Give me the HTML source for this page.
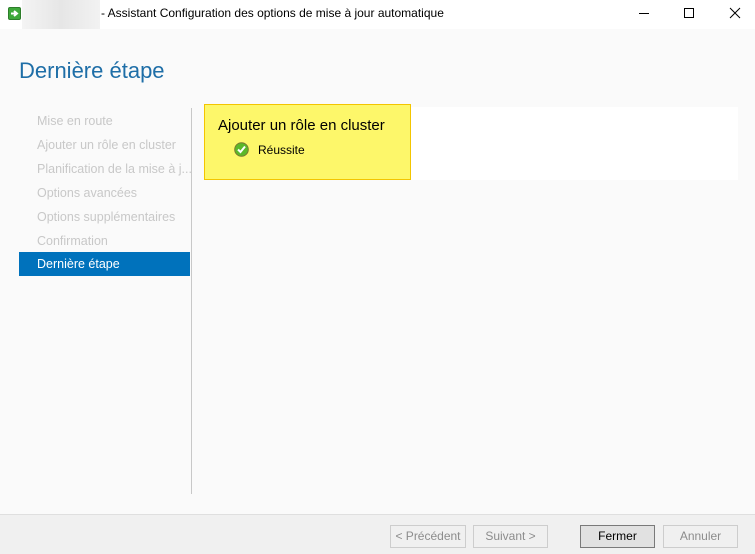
<!DOCTYPE html>
<html><head><meta charset="utf-8"><style>
*{margin:0;padding:0;box-sizing:border-box}
body{width:755px;height:554px;background:#fafafa;font-family:"Segoe UI","Liberation Sans",sans-serif;position:relative;overflow:hidden;font-size:12px;color:#000}
.a{position:absolute}
.title{left:0;top:0;width:755px;height:29px;background:#fff}
.step{left:37px;color:#c8c8c8;font-size:12.5px}
.btn{position:absolute;top:525px;height:23px;border:1px solid #cdcdcd;background:#f0f0f0;color:#8c8c8c;font-size:12px;text-align:center;line-height:21px}
</style></head><body>
<div class="a title">
 <div class="a" style="left:8px;top:7px;width:13px;height:13px;background:#3ea83a;border:1px solid #2d7d2a;border-radius:2px"></div>
 <svg class="a" style="left:9px;top:8px" width="11" height="11"><path d="M2 5.5H7M5 3L8 5.5L5 8" stroke="#fff" stroke-width="2" fill="none"/></svg>
 <div class="a" style="left:22px;top:0;width:78px;height:29px;background:linear-gradient(90deg,#f4f4f4,#e6e6e6 50%,#f2f2f2)"></div>
 <div class="a" style="left:101px;top:6px;font-size:12px">- Assistant Configuration des options de mise à jour automatique</div>
 <div class="a" style="left:639px;top:13px;width:10px;height:1px;background:#000"></div>
 <div class="a" style="left:684px;top:8px;width:10px;height:10px;border:1px solid #000"></div>
 <svg class="a" style="left:729px;top:7px" width="12" height="12"><path d="M1 1L11 11M11 1L1 11" stroke="#000" stroke-width="1"/></svg>
</div>
<div class="a" style="left:19px;top:58px;font-size:22px;color:#1e6ea7;font-weight:300">Dernière étape</div>
<div class="a step" style="top:114px">Mise en route</div>
<div class="a step" style="top:138px">Ajouter un rôle en cluster</div>
<div class="a step" style="top:162px">Planification de la mise à j...</div>
<div class="a step" style="top:186px">Options avancées</div>
<div class="a step" style="top:210px">Options supplémentaires</div>
<div class="a step" style="top:234px">Confirmation</div>
<div class="a" style="left:19px;top:252px;width:171px;height:24px;background:#0072bc;color:#fff;padding:5px 0 0 18px;font-size:12.5px">Dernière étape</div>
<div class="a" style="left:191px;top:108px;width:1px;height:386px;background:#c8c8c8"></div>
<div class="a" style="left:204px;top:107px;width:534px;height:73px;background:#fff"></div>
<div class="a" style="left:204px;top:104px;width:207px;height:76px;background:#fdf76a;border:1px solid #f3c500"></div>
<div class="a" style="left:218px;top:117px;font-size:15px;color:#000">Ajouter un rôle en cluster</div>
<svg class="a" style="left:234px;top:142px" width="15" height="15"><circle cx="7.5" cy="7.5" r="6.8" fill="#5cb82a" stroke="#7a7a30" stroke-width="1"/><path d="M4 7.5L6.5 10L11 4.5" stroke="#fff" stroke-width="2" fill="none"/></svg>
<div class="a" style="left:258px;top:143px;font-size:12px">Réussite</div>
<div class="a" style="left:0;top:514px;width:755px;height:40px;background:#f0f0f0;border-top:1px solid #dfdfdf"></div>
<div class="btn" style="left:390px;width:76px">&lt; Précédent</div>
<div class="btn" style="left:473px;width:75px">Suivant &gt;</div>
<div class="btn" style="left:580px;width:75px;background:#e1e1e1;border-color:#7a7a7a;color:#000">Fermer</div>
<div class="btn" style="left:663px;width:75px">Annuler</div>
</body></html>
